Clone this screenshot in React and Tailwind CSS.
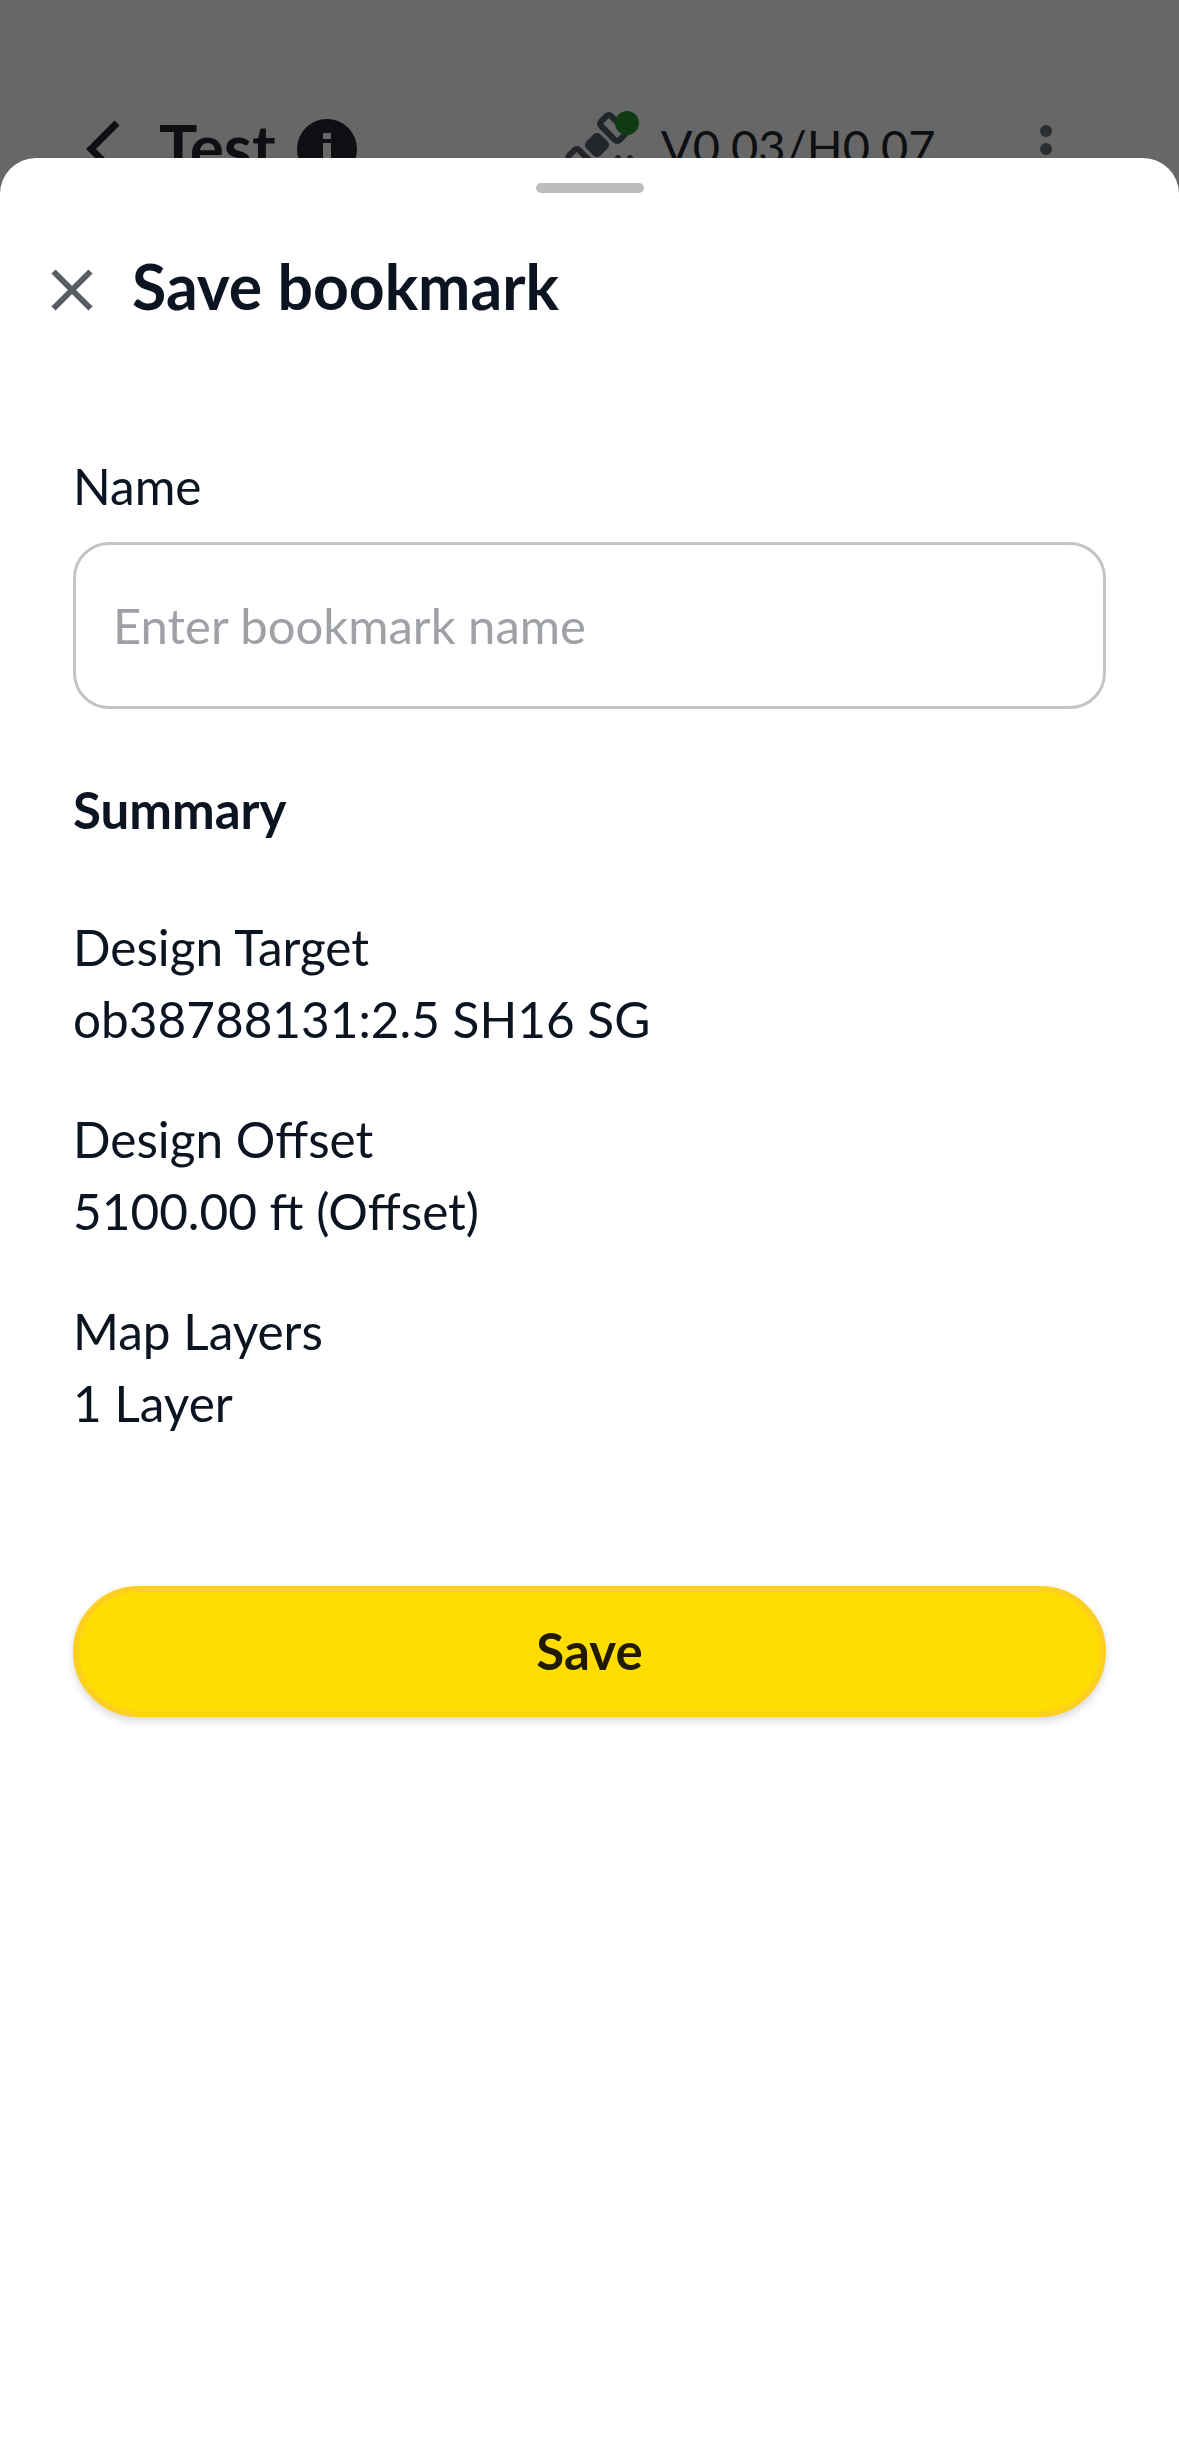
const ink = "text-[#0d1421]";

const SummaryItem = ({ label, value }) => (
  <div className={`text-[49.5px] leading-[72px] ${ink}`}>
    <p>{label}</p>
    <p>{value}</p>
  </div>
);

const App = () => {
  return (
    <div className="relative h-[2444px] w-[1179px] overflow-hidden bg-[#676767] font-['Lato','Noto_Sans',sans-serif]">
      {/* app bar dimmed behind the sheet */}
      <div className="flex h-[98px] items-center pl-[81px] pr-[127px] mt-[100px] text-[#0d0f12]">
        <svg width="40" height="60" viewBox="0 0 40 60" fill="none" stroke="currentColor" strokeWidth="7">
          <path d="M36 4 L10 30 L36 56" />
        </svg>
        <span className="ml-[38px] -mt-[4px] text-[64px] font-bold leading-[72px]">Test</span>
        <span className="relative ml-[21px] h-[60px] w-[60px] rounded-full bg-[#0d0f12]">
          <span className="absolute left-[26px] top-[14px] h-[6px] w-[8px] bg-[#676767]" />
          <span className="absolute left-[26px] top-[24px] h-[24px] w-[8px] bg-[#676767]" />
        </span>
        <svg className="ml-[183px]" width="100" height="98" viewBox="0 0 100 98">
          <g fill="none" stroke="#22262a" strokeWidth="6">
            <rect x="-7" y="-13" width="14" height="26" rx="3" transform="translate(73 28) rotate(-45)" />
            <rect x="-7" y="-13" width="14" height="26" rx="3" transform="translate(41 62) rotate(-45)" />
          </g>
          <rect x="-10" y="-10" width="20" height="20" rx="5" transform="translate(57 45) rotate(-45)" fill="#22262a" />
          <circle cx="87" cy="23" r="12" fill="#0f3a14" />
          <circle cx="78" cy="58" r="3" fill="#22262a" />
          <circle cx="90" cy="58" r="3" fill="#22262a" />
        </svg>
        <span className="ml-[21px] -mt-[6px] text-[47px] leading-[72px]">V0.03/H0.07</span>
        <span className="ml-auto flex flex-col gap-[6px]">
          <span className="h-[12px] w-[12px] rounded-full bg-[#2a2d31]" />
          <span className="h-[12px] w-[12px] rounded-full bg-[#2a2d31]" />
          <span className="h-[12px] w-[12px] rounded-full bg-[#2a2d31]" />
        </span>
      </div>

      {/* bottom sheet */}
      <div className="absolute inset-x-0 bottom-0 top-[158px] rounded-t-[36px] bg-white px-[73px]">
        <div className="mx-auto mt-[25px] h-[10px] w-[108px] rounded-full bg-[#bdbdbd]" />
        <div className={`-ml-[24px] mt-[61px] flex h-[72px] items-center gap-[37px] ${ink}`}>
          <svg width="46" height="46" viewBox="0 0 46 46" stroke="#565c63" strokeWidth="6" fill="none">
            <path d="M4.5 4.5 L41.5 41.5 M41.5 4.5 L4.5 41.5" />
          </svg>
          <h1 className="-mt-[8px] text-[62.5px] font-bold leading-[72px]">Save bookmark</h1>
        </div>

        <label className={`mt-[124px] block text-[49.5px] leading-[72px] ${ink}`}>Name</label>
        <div className="mt-[20px] flex h-[167px] items-center rounded-[36px] border-[3px] border-[#c4c4c4] px-[37px] text-[49px] text-[#9ea1a6]">
          Enter bookmark name
        </div>

        <h2 className={`mt-[65px] text-[51px] font-bold leading-[72px] ${ink}`}>Summary</h2>

        <div className="mt-[65px] flex flex-col gap-[48px]">
          <SummaryItem label="Design Target" value="ob38788131:2.5 SH16 SG" />
          <SummaryItem label="Design Offset" value="5100.00 ft (Offset)" />
          <SummaryItem label="Map Layers" value="1 Layer" />
        </div>

        <button className="mt-[147px] block h-[131px] w-full rounded-full border-[6px] border-[#fdd01f] bg-[#ffdd00] text-[51px] font-bold text-[#1f1a00] shadow-[0_4px_8px_rgba(0,0,0,0.16)]">
          Save
        </button>
      </div>
    </div>
  );
};

export default App;
